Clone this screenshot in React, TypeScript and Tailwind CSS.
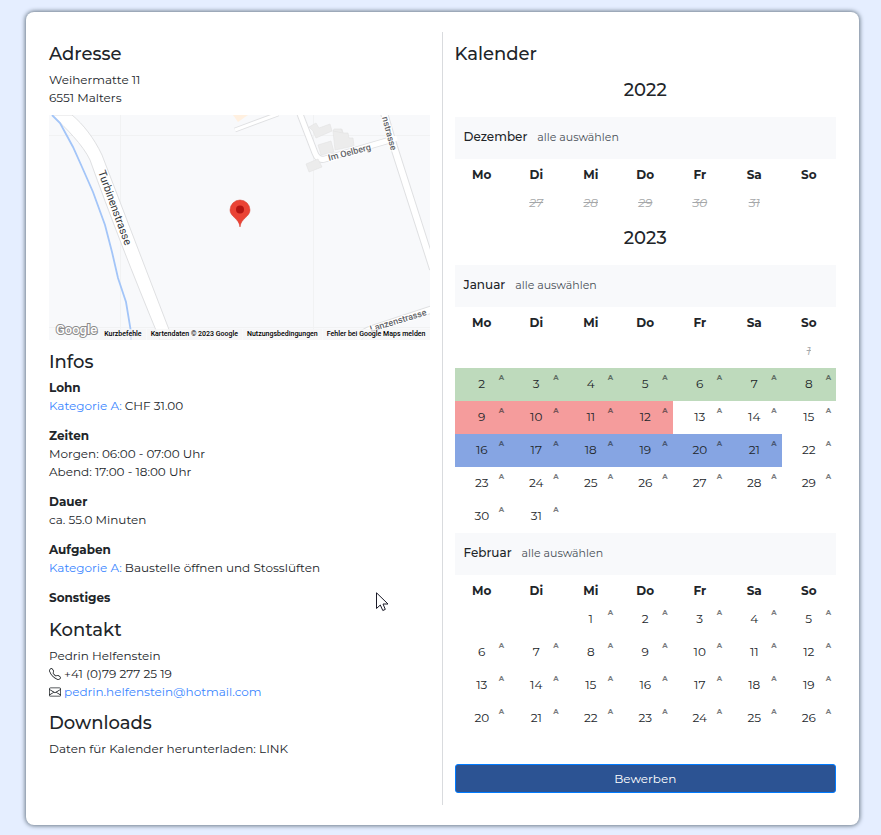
import type { ReactNode } from "react";
import { BsEnvelope, BsTelephone } from "react-icons/bs";

type Mark = "green" | "red" | "blue";

interface Day {
  day: number;
  past?: boolean;
  mark?: Mark;
}

const WEEKDAYS = ["Mo", "Di", "Mi", "Do", "Fr", "Sa", "So"];

const MARKS: Record<Mark, string> = {
  green: "bg-[#bedabc]",
  red: "bg-[#f59c9c]",
  blue: "bg-[#86a5e3]",
};

// offset = empty cells before the first day
function buildWeeks(offset: number, days: Day[]) {
  const cells: (Day | null)[] = [...Array(offset).fill(null), ...days];
  while (cells.length % 7) cells.push(null);
  const weeks: (Day | null)[][] = [];
  for (let i = 0; i < cells.length; i += 7) weeks.push(cells.slice(i, i + 7));
  return weeks;
}

function range(from: number, to: number, extra: Partial<Day> = {}): Day[] {
  return Array.from({ length: to - from + 1 }, (_, i) => ({ day: from + i, ...extra }));
}

const december = buildWeeks(1, range(27, 31, { past: true }));
const january = buildWeeks(6, [
  ...range(1, 1, { past: true }),
  ...range(2, 8, { mark: "green" }),
  ...range(9, 12, { mark: "red" }),
  ...range(13, 15),
  ...range(16, 21, { mark: "blue" }),
  ...range(22, 31),
]);
const february = buildWeeks(2, range(1, 26));

function Heading({ children }: { children: ReactNode }) {
  return <h2 className="mt-[11px] mb-[6px] text-lg leading-[22px] font-medium">{children}</h2>;
}

function Year({ children }: { children: ReactNode }) {
  return <h3 className="pt-[7px] pb-4 text-center text-lg leading-[22px] font-medium">{children}</h3>;
}

function Info({ title, children }: { title: string; children?: ReactNode }) {
  return (
    <div className="mb-3 last:mb-0">
      <h3 className="font-bold">{title}</h3>
      {children}
    </div>
  );
}

function Month({ name, weeks }: { name: string; weeks: (Day | null)[][] }) {
  return (
    <div>
      <div className="flex h-[42px] items-center gap-[10px] bg-[#f8f9fb] px-[9px] pb-[2px]">
        <h4 className="font-medium">{name}</h4>
        <button type="button" className="text-[11px] text-[#495057]">alle auswählen</button>
      </div>
      <table className="w-full table-fixed text-center">
        <thead>
          <tr className="h-7">
            {WEEKDAYS.map((d) => (
              <th key={d} className="p-0 pt-1 font-bold">{d}</th>
            ))}
          </tr>
        </thead>
        <tbody>
          {weeks.map((week, i) => (
            <tr key={i} className="h-[33px]">
              {week.map((cell, j) => (
                <td key={j} className={`relative p-0 pb-[2px] ${cell?.mark ? MARKS[cell.mark] : ""}`}>
                  {cell?.past && <s className="text-[#a5a7a9] italic">{cell.day}</s>}
                  {cell && !cell.past && (
                    <>
                      {cell.day}
                      <span className="absolute top-[5px] right-[5px] text-[7px] leading-[10px] font-bold opacity-60">A</span>
                    </>
                  )}
                </td>
              ))}
            </tr>
          ))}
        </tbody>
      </table>
    </div>
  );
}

function Road({ d, width }: { d: string; width: number }) {
  return (
    <g fill="none" strokeLinejoin="round">
      <path d={d} stroke="#dfe0e2" strokeWidth={width + 2} />
      <path d={d} stroke="#fff" strokeWidth={width} />
    </g>
  );
}

function Map() {
  return (
    <div className="relative mt-2 h-[225px] overflow-hidden bg-[#f8f9fb]">
      <svg className="h-full w-full" viewBox="0 0 382 225" preserveAspectRatio="xMinYMin slice" fontFamily="Roboto, sans-serif">
        <path d="M71.500 0V225M264.500 0V225M0 20.500H382M0 212.500H382" stroke="#f1f2f3" />
        <path d="M3 0C17 13 34 30 41 45C60 98 84 160 111 225H124L53 40C45 23 34 9 23 0Z" fill="#fff" stroke="#dfe0e2" />
        <path d="M3 0L11 8L24 32L33 52L44 77L56 110L63 137L69 163L77 187L82 217V225" fill="none" stroke="#a3c5f8" strokeWidth="1.800" />

        <path d="M184 0H199L189 7Z" fill="#fff0e0" />
        <Road d="M186 15L229 -1" width={3} />

        <g fill="#ececec" stroke="#e3e3e3" strokeWidth=".6">
          <path d="M260 12L267 8L270 13L281 9L283 16L267 23L264 16Z" />
          <path d="M284 16L293 14L294 18L299 18L300 23L304 23L305 31L286 35Z" />
          <path d="M284 16L285 14L292 14L294 18Z" />
          <path d="M269 30L282 26L285 37L272 40Z" />
        </g>
        <Road d="M251 -1L266 38Q269 46 276 44L341 25" width={5} />
        <path d="M257 49L269 44L273 52L260 57Z" fill="#ececec" stroke="#e3e3e3" strokeWidth=".6" />
        <Road d="M335 -2L345 32L384 154" width={6} />
        <path d="M341 25L348 23" stroke="#fff" strokeWidth="5" />
        <Road d="M308 225Q313 217 323 214L384 194" width={6} />

        <g fill="#5f6368" stroke="#fff" strokeWidth="2" paintOrder="stroke" fontSize="9" fontWeight="500">
          <text transform="translate(49 57) rotate(70)" fontSize="11" fontWeight="400" fill="#36393c">Turbinenstrasse</text>
          <text transform="translate(280 46) rotate(-15)">Im Oelberg</text>
          <text transform="translate(342 36) rotate(75)" textAnchor="end">nstrasse</text>
          <text transform="translate(322 217) rotate(-17)">Lanzenstrasse</text>
        </g>

        <path d="M191 112C190 103 181 102 181 95A10 10 0 0 1 201 95C201 102 192 103 191 112Z" fill="#ea4335" stroke="#d33426" strokeWidth=".5" />
        <circle cx="191" cy="94.500" r="4" fill="#b31412" />

        <text x="7" y="219" fontSize="13" fontWeight="500" fill="#fff" stroke="#8c8c8c" strokeWidth="2" paintOrder="stroke">Google</text>
      </svg>
      <div className="absolute right-0 bottom-0 flex gap-[1px] font-[Roboto,sans-serif] text-[7px] leading-[11px] font-medium whitespace-nowrap text-black">
        <button type="button" className="bg-[#f5f5f5]/70 px-1">Kurzbefehle</button>
        <span className="bg-[#f5f5f5]/70 px-1">Kartendaten © 2023 Google</span>
        <a href="#terms" className="bg-[#f5f5f5]/70 px-1">Nutzungsbedingungen</a>
        <a href="#report" className="bg-[#f5f5f5]/70 px-1">Fehler bei Google Maps melden</a>
      </div>
    </div>
  );
}

export default function App() {
  return (
    <div className="relative min-h-screen bg-[#e5eeff] pt-3 pr-[22px] pb-[10px] pl-[26px] font-[Montserrat,Inter,sans-serif] text-xs leading-[18px] text-[#212529]">
      <main className="grid grid-cols-2 rounded-lg bg-white px-[11px] py-5 shadow-[0_0_4px_1px_#6c7a89]">
        <section className="border-r border-[#d9dbde] px-3">
          <Heading>Adresse</Heading>
          <p>Weihermatte 11</p>
          <p>6551 Malters</p>
          <Map />

          <Heading>Infos</Heading>
          <Info title="Lohn">
            <p><span className="text-[#3a86ff]">Kategorie A:</span> CHF 31.00</p>
          </Info>
          <Info title="Zeiten">
            <p>Morgen: 06:00 - 07:00 Uhr</p>
            <p>Abend: 17:00 - 18:00 Uhr</p>
          </Info>
          <Info title="Dauer">
            <p>ca. 55.0 Minuten</p>
          </Info>
          <Info title="Aufgaben">
            <p><span className="text-[#3a86ff]">Kategorie A:</span> Baustelle öffnen und Stosslüften</p>
          </Info>
          <Info title="Sonstiges" />

          <Heading>Kontakt</Heading>
          <p>Pedrin Helfenstein</p>
          <p className="flex items-center gap-[3px]">
            <BsTelephone className="size-3" />
            +41 (0)79 277 25 19
          </p>
          <p className="flex items-center gap-[3px]">
            <BsEnvelope className="size-3" />
            <a href="mailto:pedrin.helfenstein@hotmail.com" className="text-[#3a86ff]">pedrin.helfenstein@hotmail.com</a>
          </p>

          <Heading>Downloads</Heading>
          <p>Daten für Kalender herunterladen: <a href="#download">LINK</a></p>
        </section>

        <section className="px-3">
          <Heading>Kalender</Heading>
          <div className="mt-[7px]">
            <Year>2022</Year>
            <Month name="Dezember" weeks={december} />
            <Year>2023</Year>
            <Month name="Januar" weeks={january} />
            <Month name="Februar" weeks={february} />
          </div>
          <button type="button" className="mt-[29px] mb-3 h-[29px] w-full rounded-[3px] border border-[#007bff] bg-[#2c5393] text-white">
            Bewerben
          </button>
        </section>
      </main>

      <svg className="pointer-events-none absolute top-[592px] left-[376px] h-[20px] w-[13px]" viewBox="0 0 13 20">
        <path d="M.5 .8V16.500L4.300 13L6.800 18.500L9.300 17.400L7 12H12Z" fill="#fff" stroke="#1a1a28" />
      </svg>
    </div>
  );
}
